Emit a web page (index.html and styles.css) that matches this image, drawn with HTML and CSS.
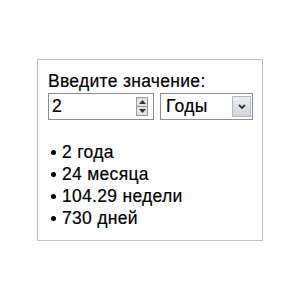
FILE: index.html
```html
<!DOCTYPE html>
<html lang="ru">
<head>
  <meta charset="UTF-8" />
  <title>Конвертер лет</title>
  <link rel="stylesheet" href="styles.css">
</head>
<body>
  <div class="card">
    <div class="prompt">Введите значение:</div>
    <div class="row">
      <div class="field">
        <input class="num" type="text" value="2">
        <span class="spin">
          <span class="spin-btn">
            <svg width="7" height="4" viewBox="0 0 7 4"><path d="M0 4 L3.5 0 L7 4 Z" fill="#333"/></svg>
          </span>
          <span class="spin-btn">
            <svg width="7" height="4" viewBox="0 0 7 4"><path d="M0 0 L3.5 4 L7 0 Z" fill="#333"/></svg>
          </span>
        </span>
      </div>
      <div class="select">
        <span class="sel-text">Годы</span>
        <span class="sel-btn">
          <svg width="8" height="6" viewBox="0 0 8 6"><path d="M1 1 L4 4 L7 1" fill="none" stroke="#333" stroke-width="1.8"/></svg>
        </span>
      </div>
    </div>
    <ul class="results">
      <li>2 года</li>
      <li>24 месяца</li>
      <li>104.29 недели</li>
      <li>730 дней</li>
    </ul>
  </div>
</body>
</html>
```

FILE: styles.css
```css
body {
  margin: 0;
  font-family: "Liberation Sans", Arial, sans-serif;
  font-size: 17.5px;
  letter-spacing: 0.3px;
  -webkit-text-stroke: 0.2px #000;
  color: #000;
  background: #fff;
}
.card {
  box-sizing: border-box;
  width: 226px;
  height: 182px;
  margin: 59px 0 0 37px;
  padding: 11px 9px 10px 10px;
  border: 1px solid #c0c0c0;
}
.prompt {
  line-height: 20px;
}
.row {
  display: flex;
  gap: 6px;
  margin-top: 2px;
}
.field {
  box-sizing: border-box;
  width: 106px;
  height: 27px;
  display: flex;
  align-items: center;
  border: 1px solid #8e8f8f;
  padding: 0 5px 0 3px;
}
.num {
  flex: 1;
  min-width: 0;
  border: none;
  outline: none;
  padding: 0;
  font: inherit;
  letter-spacing: inherit;
  color: #000;
}
.spin {
  display: flex;
  flex-direction: column;
  width: 10px;
  height: 17px;
  border: 1px solid #9a9a9a;
  background: #e4e4e4;
}
.spin-btn {
  flex: 1;
  display: flex;
  align-items: center;
  justify-content: center;
}
.spin-btn + .spin-btn {
  border-top: 1px solid #9a9a9a;
}
.select {
  box-sizing: border-box;
  width: 94px;
  height: 27px;
  display: flex;
  align-items: center;
  border: 1px solid #8e8f8f;
  padding: 1px 1px 1px 5px;
}
.sel-text {
  flex: 1;
}
.sel-btn {
  box-sizing: border-box;
  width: 19px;
  height: 21px;
  display: flex;
  align-items: center;
  justify-content: center;
  border: 1px solid #b4b8c4;
  background: linear-gradient(#eceef3, #d2d5de);
}
.results {
  list-style: none;
  margin: 21px 0 0;
  padding: 0;
  line-height: 22px;
}
.results li {
  display: flex;
  align-items: center;
}
.results li::before {
  content: "";
  flex: none;
  width: 5px;
  height: 5px;
  margin: 1px 6px 0 3px;
  border-radius: 50%;
  background: #000;
}
```
